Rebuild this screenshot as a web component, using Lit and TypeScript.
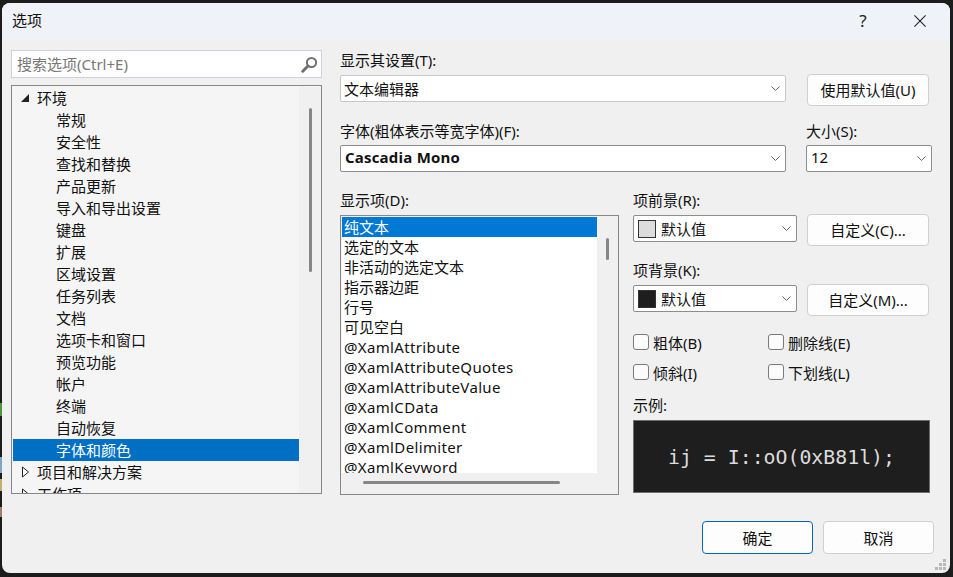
import { LitElement, html, css, svg } from "lit";
import { customElement } from "lit/decorators.js";

const chevron = svg`<svg class="chev" width="9" height="5" viewBox="0 0 9 5"><path d="M0.4 0.4 L4.5 4.5 L8.6 0.4" fill="none" stroke="#666" stroke-width="1"/></svg>`;

const treeChildren = ["常规","安全性","查找和替换","产品更新","导入和导出设置","键盘","扩展","区域设置","任务列表","文档","选项卡和窗口","预览功能","帐户","终端","自动恢复"];
const listCjk = ["选定的文本","非活动的选定文本","指示器边距","行号","可见空白"];
const listLatin = ["@XamlAttribute","@XamlAttributeQuotes","@XamlAttributeValue","@XamlCData","@XamlComment","@XamlDelimiter","@XamlKeyword"];

@customElement("app-root")
export class AppRoot extends LitElement {
  static styles = css`
    :host { display: block; position: relative; width: 953px; height: 577px; background: #1c1c1c; overflow: hidden;
      font-family: "Noto Sans", "Noto Sans CJK SC", sans-serif; font-size: 15px; color: #111; }
    * { box-sizing: border-box; }
    .edge { position: absolute; left: 0; top: 0; width: 2px; height: 577px;
      background: linear-gradient(to bottom,
        transparent 403px, #4a9a3c 403px, #4a9a3c 416px, transparent 416px,
        transparent 457px, #7ea6c4 457px, #7ea6c4 473px, transparent 473px,
        transparent 479px, #c4b06c 479px, #c4b06c 491px, transparent 491px,
        transparent 507px, #a87a66 507px, #a87a66 517px, transparent 517px); }
    .window { margin: 3px 0 0 2px; width: 948px; height: 570px; background: #f0f0f0; border-radius: 8px; overflow: hidden; display: flex; flex-direction: column; }
    .titlebar { height: 37px; flex: none; background: #eff3f9; display: flex; align-items: center; padding: 0 0 3px 10px; font-size: 15px; line-height: 20px; }
    .title { flex: 1; }
    .help { width: 18px; text-align: center; margin: 1px 42px 0 0; font-size: 17px; color: #222; }
    .close { margin: 2px 24px 0 0; display: block; }
    .content { flex: 1; display: flex; padding: 10px 0 0 9px; min-height: 0; }
    .left { width: 311px; flex: none; display: flex; flex-direction: column; }
    .search { height: 28px; background: #fff; border: 1px solid #cfd0dc; display: flex; align-items: center; padding: 0 3px 0 5px; color: #777; justify-content: space-between; line-height: 20px; }
    .tree { margin-top: 7px; height: 409px; border: 1px solid #85878c; background: #f5f5f5; display: flex; overflow: hidden; padding: 1px 0 0 1px; }
    .tree-rows { width: 286px; flex: none; height: 406px; overflow: hidden; }
    .row { height: 22px; line-height: 22px; white-space: nowrap; display: flex; align-items: center; padding-left: 43px; }
    .row.top { padding-left: 8px; }
    .row.sel { background: #006fc4; color: #fff; }
    .arrow { width: 16px; display: block; flex: none; }
    .vbar { flex: 1; background: #f0f0f0; display: flex; justify-content: center; }
    .tree .thumb { width: 3px; height: 164px; background: #868686; border-radius: 2px; margin-top: 21px; }
    .right { margin-left: 18px; flex: 1; display: flex; flex-direction: column; }
    .lbl { height: 20px; line-height: 20px; white-space: nowrap; }
    .r1 { display: flex; }
    .r1.second { margin-top: 15px; }
    .col { display: flex; flex-direction: column; }
    .w446 { width: 446px; }
    .size { margin-left: 20px; width: 126px; }
    .mt5 { margin-top: 5px; }
    .mt4 { margin-top: 4px; }
    .combo { height: 27px; background: #fff; border: 1px solid #8d8d8d; border-radius: 2px; display: flex; align-items: center; padding: 0 5px 0 4px; justify-content: space-between; white-space: nowrap; line-height: 20px; }
    .combo.light { border-color: #c8c8c8; padding-left: 3px; }
    .lift { padding-bottom: 3px; }
    .combo b { font-family: "Open Sans", "Noto Sans", sans-serif; font-weight: 700; font-size: 15px; letter-spacing: 0.2px; }
    .combo .val { display: flex; align-items: center; }
    .swatch { width: 18px; height: 18px; border: 1px solid #333; margin-right: 5px; flex: none; }
    .swatch.fg { background: #dcdcdc; }
    .swatch.bg { background: #1e1e1e; }
    .btn { background: #fdfdfd; border: 1px solid #cfcfcf; border-radius: 4px; display: flex; align-items: center; justify-content: center; white-space: nowrap; line-height: 20px; }
    .b122 { width: 122px; height: 32px; flex: none; }
    .default-btn { margin: 24px 0 0 21px; }
    .lower { display: flex; margin-top: 18px; }
    .list { margin-top: 5px; width: 279px; height: 280px; border: 1px solid #85878c; background: #f0f0f0; padding: 1px 0 0 1px; display: flex; flex-direction: column; overflow: hidden; }
    .list-main { display: flex; flex: none; height: 256px; }
    .items { width: 255px; background: #fff; height: 256px; overflow: hidden; }
    .item { height: 20px; line-height: 20px; padding-left: 2px; white-space: nowrap; }
    .item.latin { letter-spacing: 0.35px; }
    .item.sel { background: #0078d4; color: #fff; }
    .list .thumb { width: 3px; height: 22px; background: #868686; border-radius: 2px; margin-top: 21px; }
    .hbar { padding: 8px 0 0 21px; }
    .hthumb { width: 197px; height: 3px; background: #868686; border-radius: 2px; }
    .side { margin-left: 14px; width: 300px; display: flex; flex-direction: column; }
    .side .combo { width: 164px; margin-top: 1px; }
    .pair { display: flex; align-items: flex-start; height: 32px; gap: 10px; margin-top: 4px; }
    .gap { margin-top: 14px; }
    .checks { display: grid; grid-template-columns: 135px auto; row-gap: 10px; margin-top: 16px; }
    .chk { display: flex; align-items: center; height: 20px; gap: 4px; white-space: nowrap; }
    .box { width: 16px; height: 16px; background: #fbfbfb; border: 1px solid #7a7a7a; border-radius: 3px; flex: none; }
    .sample-l { margin-top: 13px; }
    .sample { margin-top: 5px; width: 297px; height: 73px; background: #1e1e1e; border: 1px solid #6e6e6e; display: flex; align-items: center; justify-content: center; color: #dcdcdc; font-family: "DejaVu Sans Mono", monospace; font-size: 19.85px; white-space: pre; padding-top: 2px; }
    .footer { height: 52px; flex: none; display: flex; justify-content: flex-end; padding: 0 16px 19px 0; gap: 10px; position: relative; align-items: flex-start; }
    .fbtn { width: 111px; height: 33px; }
    .fbtn.def { border: 1px solid #0067c0; }
    .grip { position: absolute; right: 3px; bottom: 2px; display: block; }
  `;

  render() {
    return html`
      <div class="edge"></div>
      <div class="window">
        <div class="titlebar">
          <span class="title">选项</span>
          <span class="help">?</span>
          <svg class="close" width="12" height="12" viewBox="0 0 12 12"><path d="M0.4 0.4 L11.6 11.6 M11.6 0.4 L0.4 11.6" stroke="#222" stroke-width="1.1" fill="none"/></svg>
        </div>
        <div class="content">
          <div class="left">
            <div class="search">
              <span>搜索选项(Ctrl+E)</span>
              <svg width="17" height="17" viewBox="0 0 17 17"><circle cx="10.5" cy="6.5" r="4.6" fill="none" stroke="#717171" stroke-width="2"/><path d="M7 10 L1.8 15.2" stroke="#717171" stroke-width="3" stroke-linecap="round"/></svg>
            </div>
            <div class="tree">
              <div class="tree-rows">
                <div class="row top">
                  <svg class="arrow" width="16" height="10" viewBox="0 0 16 10"><path d="M0 9 L8 9 L8 1 Z" fill="#222"/></svg>环境
                </div>
                ${treeChildren.map((t) => html`<div class="row">${t}</div>`)}
                <div class="row sel">字体和颜色</div>
                <div class="row top">
                  <svg class="arrow" width="16" height="12" viewBox="0 0 16 12"><path d="M1.5 1 L7.5 6 L1.5 11 Z" fill="#fff" stroke="#222"/></svg>项目和解决方案
                </div>
                <div class="row top">
                  <svg class="arrow" width="16" height="12" viewBox="0 0 16 12"><path d="M1.5 1 L7.5 6 L1.5 11 Z" fill="#fff" stroke="#222"/></svg>工作项
                </div>
              </div>
              <div class="vbar"><div class="thumb"></div></div>
            </div>
          </div>
          <div class="right">
            <div class="r1">
              <div class="col w446">
                <div class="lbl">显示其设置(T):</div>
                <div class="combo light mt5"><span>文本编辑器</span>${chevron}</div>
              </div>
              <div class="btn b122 default-btn">使用默认值(U)</div>
            </div>
            <div class="r1 second">
              <div class="col w446">
                <div class="lbl">字体(粗体表示等宽字体)(F):</div>
                <div class="combo mt4"><b class="lift">Cascadia Mono</b>${chevron}</div>
              </div>
              <div class="col size">
                <div class="lbl">大小(S):</div>
                <div class="combo mt4"><span class="lift">12</span>${chevron}</div>
              </div>
            </div>
            <div class="lower">
              <div class="col">
                <div class="lbl">显示项(D):</div>
                <div class="list">
                  <div class="list-main">
                    <div class="items">
                      <div class="item sel">纯文本</div>
                      ${listCjk.map((t) => html`<div class="item">${t}</div>`)}
                      ${listLatin.map((t) => html`<div class="item latin">${t}</div>`)}
                    </div>
                    <div class="vbar"><div class="thumb"></div></div>
                  </div>
                  <div class="hbar"><div class="hthumb"></div></div>
                </div>
              </div>
              <div class="side">
                <div class="lbl">项前景(R):</div>
                <div class="pair">
                  <div class="combo"><span class="val"><span class="swatch fg"></span>默认值</span>${chevron}</div>
                  <div class="btn b122">自定义(C)...</div>
                </div>
                <div class="lbl gap">项背景(K):</div>
                <div class="pair">
                  <div class="combo"><span class="val"><span class="swatch bg"></span>默认值</span>${chevron}</div>
                  <div class="btn b122">自定义(M)...</div>
                </div>
                <div class="checks">
                  <div class="chk"><span class="box"></span>粗体(B)</div>
                  <div class="chk"><span class="box"></span>删除线(E)</div>
                  <div class="chk"><span class="box"></span>倾斜(I)</div>
                  <div class="chk"><span class="box"></span>下划线(L)</div>
                </div>
                <div class="lbl sample-l">示例:</div>
                <div class="sample">ij = I::oO(0xB81l);</div>
              </div>
            </div>
          </div>
        </div>
        <div class="footer">
          <div class="btn fbtn def">确定</div>
          <div class="btn fbtn">取消</div>
          <svg class="grip" width="12" height="12" viewBox="0 0 12 12" fill="#b8b8b8"><rect x="8" y="0" width="3" height="3"/><rect x="4" y="4" width="3" height="3"/><rect x="8" y="4" width="3" height="3"/><rect x="0" y="8" width="3" height="3"/><rect x="4" y="8" width="3" height="3"/><rect x="8" y="8" width="3" height="3"/></svg>
        </div>
      </div>
    `;
  }
}
